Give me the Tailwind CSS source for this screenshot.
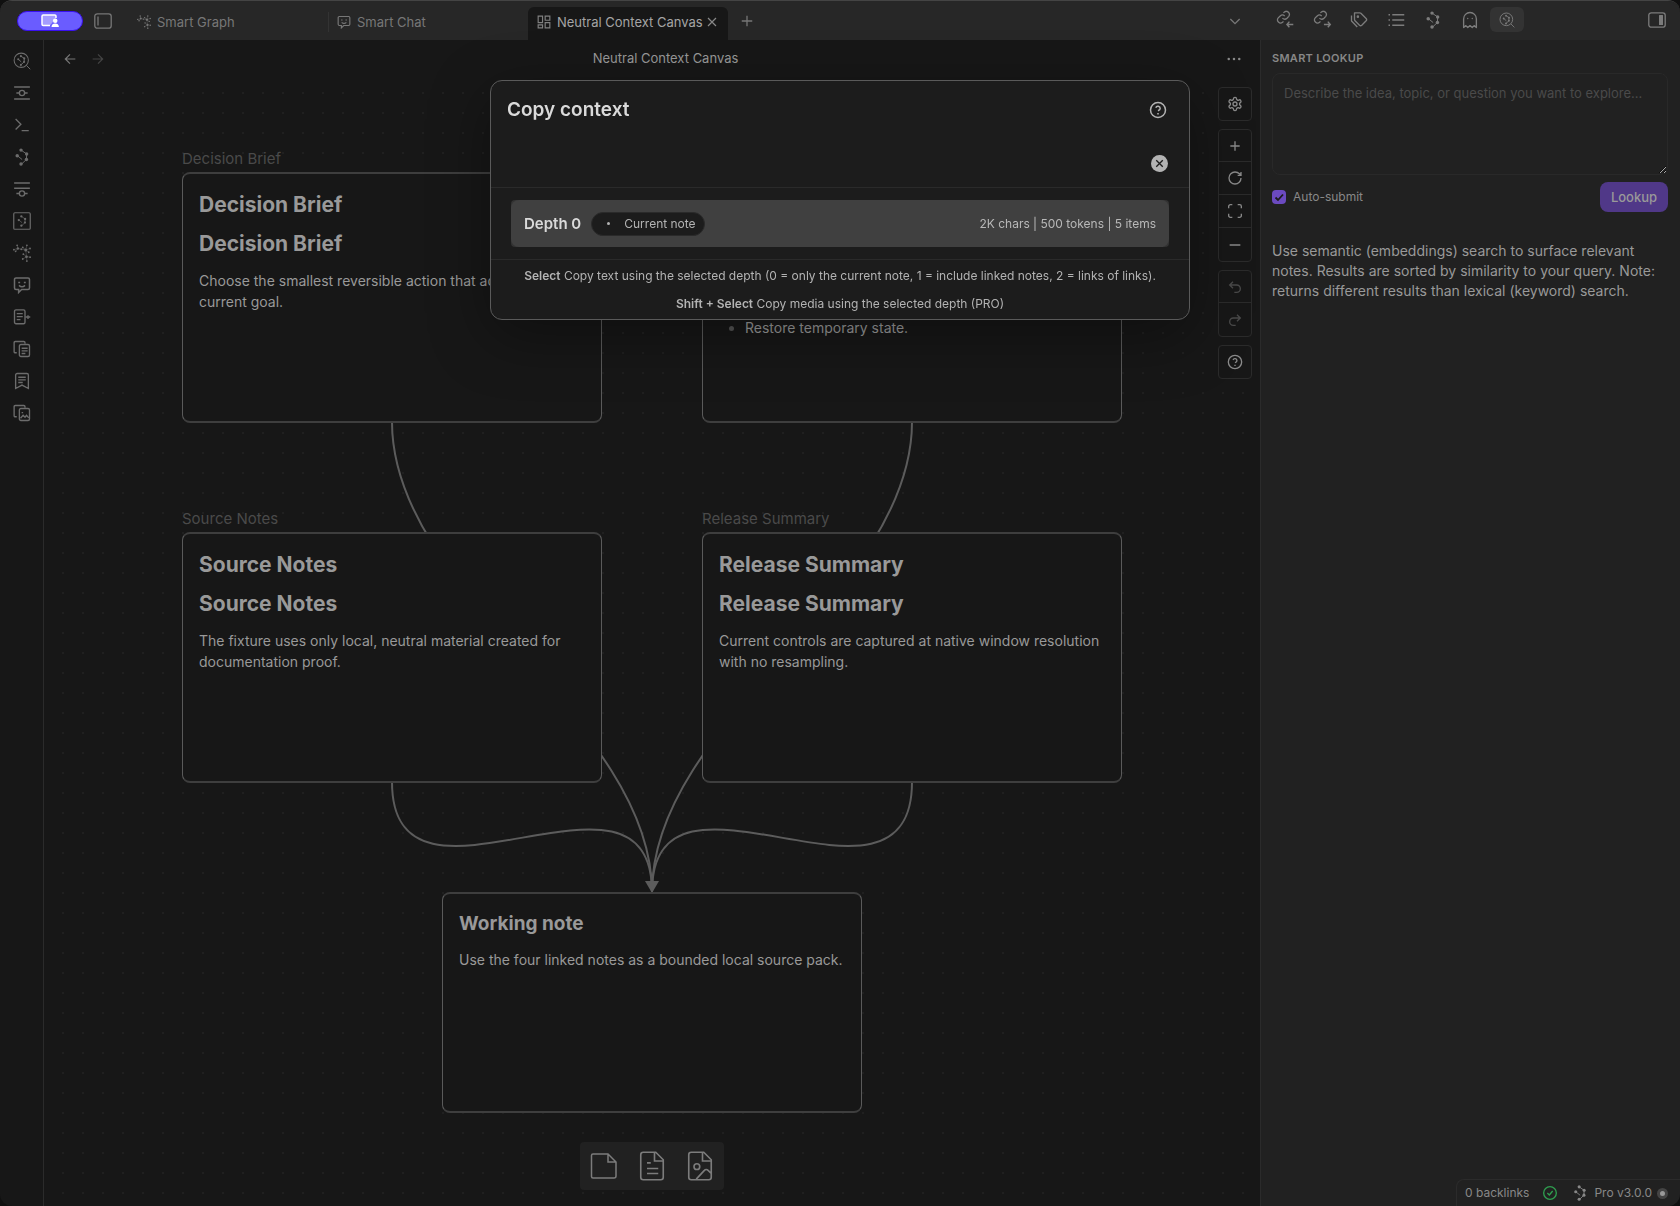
<!DOCTYPE html>
<html lang="en">
<head>
  <meta charset="UTF-8">
  <meta name="viewport" content="width=device-width, initial-scale=1.0">
  <title>Neutral Context Canvas</title>
  <!-- Tailwind CSS -->
  <script src="https://cdn.jsdelivr.net/npm/@tailwindcss/browser@4"></script>
</head>
<body class="bg-[#101010] font-['Inter',sans-serif] text-sm text-[#999]">
  <!-- Icon sprite -->
  <svg class="hidden" aria-hidden="true">
    <symbol id="i-network" viewBox="0 0 24 24">
      <path d="M10.7 2.7 18.2 8l-.3 7.2-7.2 7M5.8 10.2l6.4 5.2" fill="none" stroke="currentColor" stroke-width="1.3"/>
      <g fill="currentColor" stroke="none"><circle cx="10.7" cy="2.8" r="2.3"/><circle cx="18.2" cy="8" r="2.3"/><circle cx="17.9" cy="15.2" r="2.3"/><circle cx="10.7" cy="21.4" r="2.3"/><circle cx="5.6" cy="10.2" r="2.3"/></g>
    </symbol>
    <symbol id="i-graph" viewBox="0 0 24 24">
      <path d="M1 7.5 6.5 6l4.500 1M6.500 6 5.500 1.800M6.500 6 3.500 9.800M17 8l-4-3.500M17 8l1.500-6M17 8l5.500-2M17 8l4 3M17 8l1 9M18 17l-4-3.500M18 17l-5 3M18 17l.5 6M18 17l5 .5M11 7l6 1" fill="none" stroke="currentColor" stroke-width=".6"/>
      <g fill="currentColor" stroke="none"><circle cx="6.500" cy="6" r="1.600"/><circle cx="1.200" cy="7.500" r="1.200"/><circle cx="5.500" cy="1.800" r="1.200"/><circle cx="3.500" cy="9.800" r="1.200"/><circle cx="11" cy="7" r="1.200"/><circle cx="17" cy="8" r="2"/><circle cx="13" cy="4.500" r="1.200"/><circle cx="18.500" cy="1.800" r="1.200"/><circle cx="22.700" cy="6" r="1.200"/><circle cx="21" cy="11" r="1.200"/><circle cx="18" cy="17" r="1.800"/><circle cx="13.800" cy="13.500" r="1.200"/><circle cx="13" cy="20" r="1.200"/><circle cx="18.500" cy="22.700" r="1.200"/><circle cx="22.800" cy="17.500" r="1.200"/></g>
    </symbol>
    <symbol id="i-lookup" viewBox="0 0 24 24">
      <circle cx="11" cy="11" r="9.500" fill="none" stroke="currentColor" stroke-width="1.400"/><path d="m18 18 5 5M10.500 5.500l4.500 3-.2 4.700-4.300 4M7 9.700l4 3.500" fill="none" stroke="currentColor" stroke-width="1.300"/>
      <g fill="currentColor" stroke="none"><circle cx="10.500" cy="5.500" r="1.400"/><circle cx="15" cy="8.500" r="1.400"/><circle cx="14.800" cy="13.200" r="1.400"/><circle cx="10.500" cy="17.200" r="1.400"/><circle cx="7" cy="9.700" r="1.400"/></g>
    </symbol>
    <symbol id="i-smile" viewBox="0 0 24 24">
      <path d="M4 2.500h16a2 2 0 0 1 2 2V16a2 2 0 0 1-2 2h-8.500l-4 4v-4H4a2 2 0 0 1-2-2V4.500a2 2 0 0 1 2-2ZM7 8.500h2.500M14.500 8.500H17M8 12.500c2.500 2.500 5.500 2.500 8 0"/>
    </symbol>
    <symbol id="i-help" viewBox="0 0 24 24"><circle cx="12" cy="12" r="10"/><path d="M9.090 9a3 3 0 0 1 5.830 1c0 2-3 3-3 3M11 17h2"/></symbol>
    <symbol id="i-x" viewBox="0 0 24 24"><path d="M18 6 6 18M6 6l12 12"/></symbol>
    <symbol id="i-plus" viewBox="0 0 24 24"><path d="M5 12h14M12 5v14"/></symbol>
    <symbol id="i-left" viewBox="0 0 24 24"><path d="m12 19-7-7 7-7M20 12H5"/></symbol>
    <symbol id="i-right" viewBox="0 0 24 24"><path d="M4 12h15M12 5l7 7-7 7"/></symbol>
    <symbol id="i-link" viewBox="0 0 24 24"><path d="M9.500 12a5 5 0 0 0 7 .3l2.700-3A4.800 4.800 0 0 0 12.500 2.600L11 4M13 9a5 5 0 0 0-7-.3l-3 3a4.800 4.800 0 0 0 6.700 6.800L11 17"/></symbol>
  </svg>

  <div class="flex h-screen flex-col overflow-hidden rounded-xl border-t border-[#444] bg-[#171717]">
    <!-- Title bar -->
    <header class="flex h-[39px] shrink-0 bg-[#272727]">
      <div class="flex min-w-0 flex-1 items-center">
        <button class="ml-[17px] flex h-5 w-[66px] shrink-0 items-center justify-center rounded-full border border-[#3a10f0] bg-[#6a5cff] text-white" aria-label="Screen sharing">
          <svg class="h-[14px] w-[18px]" viewBox="0 0 18 14"><path d="M9 11.500H2.200A1.200 1.200 0 0 1 1 10.300V2.200A1.200 1.200 0 0 1 2.200 1h11.600A1.200 1.200 0 0 1 15 2.200V4" fill="#a49cff" stroke="#fff" stroke-width="1.500"/><circle cx="14.200" cy="6.800" r="2.300" fill="#fff"/><path d="M10.500 13c0-2.600 1.700-3.600 3.700-3.600s3.700 1 3.700 3.600z" fill="#fff"/></svg>
        </button>
        <button class="ml-[11px] text-[#777]" aria-label="Toggle left sidebar">
          <svg class="h-4 w-[18px]" viewBox="0 0 18 16" fill="none" stroke="currentColor" stroke-width="1.300"><rect x=".8" y=".8" width="16.400" height="14.400" rx="2.500"/><path d="M4 3.500v9"/></svg>
        </button>
        <nav class="ml-[17px] flex h-full flex-1 items-end text-[13px]">
          <a href="#" class="flex h-[33px] w-[200px] items-center pb-[3px] pl-2 text-[#777]">
            <svg class="mr-[6px] size-[14px]"><use href="#i-graph"/></svg>Smart Graph
          </a>
          <a href="#" class="relative flex h-[33px] w-[199px] items-center pb-[3px] pl-2 text-[#777] before:absolute before:left-[-1px] before:top-[5px] before:h-5 before:w-px before:bg-[#333]">
            <svg class="mr-[6px] size-[14px]" fill="none" stroke="currentColor" stroke-width="2"><use href="#i-smile"/></svg>Smart Chat
          </a>
          <a href="#" class="flex h-[33px] w-[200px] items-center whitespace-nowrap rounded-t-md bg-[#171717] pb-[3px] pl-[9px] pr-2 text-[#a5a5a5]">
            <svg class="mr-[6px] size-[14px] shrink-0 text-[#808080]" viewBox="0 0 24 24" fill="none" stroke="currentColor" stroke-width="2"><path d="M2 2h7.500v11H2zM14 2h8v7h-8zM14 13h8v9h-8zM2 17h7.500v5H2z"/></svg>
            <span class="flex-1">Neutral Context Canvas</span>
            <svg class="size-4 shrink-0 text-[#888]" fill="none" stroke="currentColor" stroke-width="1.800"><use href="#i-x"/></svg>
          </a>
          <button class="mb-[10px] ml-[10px] text-[#777]" aria-label="New tab"><svg class="size-[18px]" fill="none" stroke="currentColor" stroke-width="1.700"><use href="#i-plus"/></svg></button>
        </nav>
        <button class="mr-[17px] text-[#777]" aria-label="Tab list"><svg class="size-4" viewBox="0 0 24 24" fill="none" stroke="currentColor" stroke-width="2"><path d="m5 9 7 7 7-7"/></svg></button>
      </div>
      <div class="flex w-[420px] shrink-0 items-center gap-[3px] pb-[2px] pl-2 text-[#7c7c7c]">
        <button class="flex h-[25px] w-[34px] items-center justify-center" aria-label="Backlinks"><svg class="size-[17px] overflow-visible" viewBox="0 0 24 24" fill="none" stroke="currentColor" stroke-width="2"><use href="#i-link" width="22" height="22" x="-1" y="-1"/><path d="M23 19h-9m3.500-4L14 19l3.500 4"/></svg></button>
        <button class="flex h-[25px] w-[34px] items-center justify-center" aria-label="Outgoing links"><svg class="size-[17px] overflow-visible" viewBox="0 0 24 24" fill="none" stroke="currentColor" stroke-width="2"><use href="#i-link" width="22" height="22" x="-1" y="-1"/><path d="M14 19h9m-3.500-4 3.500 4-3.500 4"/></svg></button>
        <button class="flex h-[25px] w-[34px] items-center justify-center" aria-label="Tags"><svg class="size-[18px]" viewBox="0 0 24 24" fill="none" stroke="currentColor" stroke-width="1.800" stroke-linejoin="round"><path d="M6 2.500h7a2 2 0 0 1 1.500.6l7 7a2.200 2.200 0 0 1 0 3l-5.800 5.800a2.200 2.200 0 0 1-3 0l-6-6a2 2 0 0 1-.7-1.500z"/><path d="M2 6v6.500c0 .6.300 1.200.7 1.600l7 7.200"/><circle cx="10.500" cy="7.500" r=".8" fill="currentColor"/></svg></button>
        <button class="flex h-[25px] w-[34px] items-center justify-center" aria-label="Outline"><svg class="size-[18px]" viewBox="0 0 24 24" fill="none" stroke="currentColor" stroke-width="1.800"><path d="M7 5h16M7 12h16M7 19h16M2 5h2M2 12h2M2 19h2"/></svg></button>
        <button class="flex h-[25px] w-[34px] items-center justify-center" aria-label="Connections"><svg class="size-[18px]"><use href="#i-network"/></svg></button>
        <button class="flex h-[25px] w-[34px] items-center justify-center" aria-label="Ghost"><svg class="size-[18px]" viewBox="0 0 24 24" fill="none" stroke="currentColor" stroke-width="1.800" stroke-linejoin="round"><path d="M9 10h.01M15 10h.01M12 2a8.500 8.500 0 0 0-8.500 8.500V22l3-2.500L9 22l3-2.500 3 2.500 2.500-2.500 3 2.500V10.500A8.500 8.500 0 0 0 12 2z" stroke-linecap="round"/></svg></button>
        <button class="flex h-[25px] w-[34px] items-center justify-center rounded-md bg-[#333]" aria-label="Smart Lookup"><svg class="size-4"><use href="#i-lookup"/></svg></button>
        <button class="ml-auto mr-[14px]" aria-label="Toggle right sidebar"><svg class="h-4 w-[18px]" viewBox="0 0 18 16" fill="none" stroke="currentColor" stroke-width="1.300"><rect x=".8" y=".8" width="16.400" height="14.400" rx="2.500"/><rect x="11" y="3" width="4" height="10" rx=".5" fill="currentColor" stroke="none"/></svg></button>
      </div>
    </header>

    <div class="flex min-h-0 flex-1">
      <!-- Ribbon -->
      <aside class="flex w-11 shrink-0 flex-col items-center gap-[14px] border-r border-[#2b2b2b] pt-3 text-[#6c6c6c]">
        <button aria-label="Smart Lookup"><svg class="size-[18px]"><use href="#i-lookup"/></svg></button>
        <button aria-label="Random connection"><svg class="size-[18px]" viewBox="0 0 24 24" fill="none" stroke="currentColor" stroke-width="1.800"><path d="M1.500 4h21M1.500 20h21M4.500 12H9M15 12h4.500"/><circle cx="12" cy="12" r="3.500"/></svg></button>
        <button aria-label="Command palette"><svg class="size-[18px]" viewBox="0 0 24 24" fill="none" stroke="currentColor" stroke-width="1.800"><path d="m3.500 4 7 7-7 7M11.500 19.500H21"/></svg></button>
        <button aria-label="Connections"><svg class="size-[18px]"><use href="#i-network"/></svg></button>
        <button aria-label="Footer connections"><svg class="size-[18px]" viewBox="0 0 24 24" fill="none" stroke="currentColor" stroke-width="1.800"><path d="M1.500 4h21M1.500 11h21M4.500 18H9M15 18h4.500"/><circle cx="12" cy="18" r="3.500"/></svg></button>
        <button aria-label="Smart Context"><svg class="size-[18px]" viewBox="0 0 24 24" fill="none" stroke="currentColor" stroke-width="1.600"><rect x="1" y="1" width="22" height="22" rx="1.500"/><use href="#i-network" x="4" y="4" width="16" height="16"/></svg></button>
        <button aria-label="Smart Graph"><svg class="size-[18px]"><use href="#i-graph"/></svg></button>
        <button aria-label="Smart Chat"><svg class="size-[18px]" fill="none" stroke="currentColor" stroke-width="2"><use href="#i-smile"/></svg></button>
        <button aria-label="Add note"><svg class="size-[18px]" viewBox="0 0 24 24" fill="none" stroke="currentColor" stroke-width="1.800"><rect x="2" y="2.500" width="14" height="18.500" rx="2"/><path d="M5 7.500h8M5 11.500h8M5 15.500h5M16.500 12H23M20 9.500v5"/></svg></button>
        <button aria-label="Copy note"><svg class="size-[18px]" viewBox="0 0 24 24" fill="none" stroke="currentColor" stroke-width="1.800"><path d="M5 17H3a1.500 1.500 0 0 1-1.500-1.500v-12A1.500 1.500 0 0 1 3 2h11.500A1.500 1.500 0 0 1 16 3.500V5"/><rect x="8.500" y="6" width="13.500" height="16" rx="2"/><path d="M11.500 11h8M11.500 14.500h8M11.500 18h5"/></svg></button>
        <button aria-label="Bookmarks"><svg class="size-[18px]" viewBox="0 0 24 24" fill="none" stroke="currentColor" stroke-width="1.800"><path d="M5.500 2h13a2 2 0 0 1 2 2v18L12 17.500 3.500 22V4a2 2 0 0 1 2-2ZM7 7h10M7 10.500h10M7 14h6"/></svg></button>
        <button aria-label="Copy media"><svg class="size-[18px]" viewBox="0 0 24 24" fill="none" stroke="currentColor" stroke-width="1.800"><path d="M5 17H3a1.500 1.500 0 0 1-1.500-1.500v-12A1.500 1.500 0 0 1 3 2h11.500A1.500 1.500 0 0 1 16 3.500V5"/><rect x="8.500" y="6" width="13.500" height="16" rx="2"/><path d="m10 19 3.500-4 2.500 2.500 2-2.500 3 3.500M11.500 11.500h2"/></svg></button>
      </aside>

      <main class="flex min-w-0 flex-1 flex-col">
        <div class="flex h-[38px] shrink-0 items-center pb-px pl-[18px] pr-[17px]">
          <div class="flex gap-3">
            <button class="text-[#777]" aria-label="Back"><svg class="size-4" fill="none" stroke="currentColor" stroke-width="1.800"><use href="#i-left"/></svg></button>
            <button class="text-[#444]" aria-label="Forward"><svg class="size-4" fill="none" stroke="currentColor" stroke-width="1.800"><use href="#i-right"/></svg></button>
          </div>
          <h1 class="flex-1 text-center text-[13px]">Neutral Context Canvas</h1>
          <button class="text-[#888]" aria-label="More options"><svg class="size-[18px]" viewBox="0 0 24 24" fill="currentColor"><circle cx="5" cy="12" r="1.700"/><circle cx="12" cy="12" r="1.700"/><circle cx="19" cy="12" r="1.700"/></svg></button>
        </div>

        <!-- Canvas -->
        <div class="relative flex-1 overflow-hidden bg-[radial-gradient(circle_at_1px_1px,#202020_1px,transparent_1px)] bg-[length:20px_20px] bg-[position:18px_14px] text-[#999]">
          <svg class="absolute left-0 top-0 h-full w-full" fill="none" stroke="#5c5c5c" stroke-width="2">
            <path d="M348 344C348 516 608 643 608 814"/>
            <path d="M868 344C868 516 608 643 608 814"/>
            <path d="M348 704C348 861 608 659 608 814"/>
            <path d="M868 704C868 861 608 659 608 814"/>
            <path d="M601 803h14l-7 12z" fill="#5c5c5c" stroke="none"/>
          </svg>

          <div class="absolute left-[138px] top-[68px] w-[420px]">
            <div class="h-[26px] text-[15px] leading-[26px] text-[#4a4a4a]">Decision Brief</div>
            <article class="h-[251px] rounded-lg border-x border-y-2 border-x-[#5a5a5a] border-y-[#3e3e3e] bg-[#171717] px-4 pt-[11px]">
              <h2 class="text-[21px] font-bold leading-[39px]">Decision Brief</h2>
              <h2 class="text-[21px] font-bold leading-[39px]">Decision Brief</h2>
              <p class="mt-[7px] leading-[21px]">Choose the smallest reversible action that advances the current goal.</p>
            </article>
          </div>
          <div class="absolute left-[658px] top-[68px] w-[420px]">
            <div class="h-[26px] text-[15px] leading-[26px] text-[#4a4a4a]">Checklist</div>
            <article class="h-[251px] rounded-lg border-x border-y-2 border-x-[#5a5a5a] border-y-[#3e3e3e] bg-[#171717] px-4 pt-[11px]">
              <h2 class="text-[21px] font-bold leading-[39px]">Checklist</h2>
              <h2 class="text-[21px] font-bold leading-[39px]">Checklist</h2>
              <ul class="mt-[54px] list-disc pl-[26px] leading-[21px] marker:text-[#555]">
                <li>Restore temporary state.</li>
              </ul>
            </article>
          </div>
          <div class="absolute left-[138px] top-[428px] w-[420px]">
            <div class="h-[26px] text-[15px] leading-[26px] text-[#4a4a4a]">Source Notes</div>
            <article class="h-[251px] rounded-lg border-x border-y-2 border-x-[#5a5a5a] border-y-[#3e3e3e] bg-[#171717] px-4 pt-[11px]">
              <h2 class="text-[21px] font-bold leading-[39px]">Source Notes</h2>
              <h2 class="text-[21px] font-bold leading-[39px]">Source Notes</h2>
              <p class="mt-[7px] leading-[21px]">The fixture uses only local, neutral material created for documentation proof.</p>
            </article>
          </div>
          <div class="absolute left-[658px] top-[428px] w-[420px]">
            <div class="h-[26px] text-[15px] leading-[26px] text-[#4a4a4a]">Release Summary</div>
            <article class="h-[251px] rounded-lg border-x border-y-2 border-x-[#5a5a5a] border-y-[#3e3e3e] bg-[#171717] px-4 pt-[11px]">
              <h2 class="text-[21px] font-bold leading-[39px]">Release Summary</h2>
              <h2 class="text-[21px] font-bold leading-[39px]">Release Summary</h2>
              <p class="mt-[7px] leading-[21px]">Current controls are captured at native window resolution with no resampling.</p>
            </article>
          </div>
          <article class="absolute left-[398px] top-[814px] h-[221px] w-[420px] rounded-lg border-x border-y-2 border-x-[#5a5a5a] border-y-[#3e3e3e] bg-[#171717] px-4 pt-[10px]">
            <h2 class="text-[19px] font-bold leading-[39px]">Working note</h2>
            <p class="mt-[6px] leading-[21px]">Use the four linked notes as a bounded local source pack.</p>
          </article>

          <!-- Canvas controls -->
          <div class="absolute right-2 top-[9px] flex w-[34px] flex-col gap-2 text-[#8a8a8a]">
            <div class="rounded border border-[#2b2b2b] bg-[#171717]">
              <button class="flex h-8 w-full items-center justify-center" aria-label="Canvas settings"><svg class="size-4" viewBox="0 0 24 24" fill="none" stroke="currentColor" stroke-width="2" stroke-linejoin="round"><path d="M12.220 2h-.44a2 2 0 0 0-2 2v.18a2 2 0 0 1-1 1.730l-.43.25a2 2 0 0 1-2 0l-.15-.08a2 2 0 0 0-2.730.73l-.22.38a2 2 0 0 0 .73 2.730l.15.1a2 2 0 0 1 1 1.720v.51a2 2 0 0 1-1 1.740l-.15.09a2 2 0 0 0-.73 2.730l.22.38a2 2 0 0 0 2.730.73l.15-.08a2 2 0 0 1 2 0l.43.25a2 2 0 0 1 1 1.730V20a2 2 0 0 0 2 2h.44a2 2 0 0 0 2-2v-.18a2 2 0 0 1 1-1.730l.43-.25a2 2 0 0 1 2 0l.15.08a2 2 0 0 0 2.730-.73l.22-.39a2 2 0 0 0-.73-2.730l-.15-.08a2 2 0 0 1-1-1.740v-.5a2 2 0 0 1 1-1.740l.15-.09a2 2 0 0 0 .73-2.730l-.22-.38a2 2 0 0 0-2.730-.73l-.15.08a2 2 0 0 1-2 0l-.43-.25a2 2 0 0 1-1-1.730V4a2 2 0 0 0-2-2z"/><circle cx="12" cy="12" r="3"/></svg></button>
            </div>
            <div class="divide-y divide-[#2b2b2b] rounded border border-[#2b2b2b] bg-[#171717]">
              <button class="flex h-8 w-full items-center justify-center" aria-label="Zoom in"><svg class="size-4" fill="none" stroke="currentColor" stroke-width="2"><use href="#i-plus"/></svg></button>
              <button class="flex h-[33px] w-full items-center justify-center" aria-label="Reset zoom"><svg class="size-4" viewBox="0 0 24 24" fill="none" stroke="currentColor" stroke-width="2"><path d="M21 12a9 9 0 1 1-9-9c2.520 0 4.930 1 6.740 2.740L21 8M21 3v5h-5"/></svg></button>
              <button class="flex h-[33px] w-full items-center justify-center" aria-label="Zoom to fit"><svg class="size-4" viewBox="0 0 24 24" fill="none" stroke="currentColor" stroke-width="2"><path d="M8 2.500H5A2.500 2.500 0 0 0 2.500 5v3M21.500 8V5A2.500 2.500 0 0 0 19 2.500h-3M2.500 16v3A2.500 2.500 0 0 0 5 21.500h3M16 21.500h3a2.500 2.500 0 0 0 2.500-2.500v-3"/></svg></button>
              <button class="flex h-[33px] w-full items-center justify-center" aria-label="Zoom out"><svg class="size-4" viewBox="0 0 24 24" fill="none" stroke="currentColor" stroke-width="2"><path d="M4 12h16"/></svg></button>
            </div>
            <div class="divide-y divide-[#2b2b2b] rounded border border-[#2b2b2b] bg-[#171717] text-[#4a4a4a]">
              <button class="flex h-8 w-full items-center justify-center" aria-label="Undo"><svg class="size-4" viewBox="0 0 24 24" fill="none" stroke="currentColor" stroke-width="2"><path d="M9 14 4 9l5-5M4 9h10.500a5.500 5.500 0 0 1 0 11H11"/></svg></button>
              <button class="flex h-[33px] w-full items-center justify-center" aria-label="Redo"><svg class="size-4" viewBox="0 0 24 24" fill="none" stroke="currentColor" stroke-width="2"><path d="m15 14 5-5-5-5M20 9H9.500a5.500 5.500 0 0 0 0 11H13"/></svg></button>
            </div>
            <div class="rounded border border-[#2b2b2b] bg-[#171717]">
              <button class="flex h-8 w-full items-center justify-center" aria-label="Canvas help"><svg class="size-4" fill="none" stroke="currentColor" stroke-width="2"><use href="#i-help"/></svg></button>
            </div>
          </div>

          <!-- Card menu -->
          <div class="absolute bottom-4 left-1/2 flex -translate-x-1/2 rounded bg-[#212121] text-[#7c7c7c]">
            <button class="flex size-12 items-center justify-center" aria-label="Add card"><svg class="size-7" viewBox="0 0 28 28" fill="none" stroke="currentColor" stroke-width="1.500"><path d="M3 2h15l8 8v14a2 2 0 0 1-2 2H3a1.500 1.500 0 0 1-1.500-1.500v-21A1.500 1.500 0 0 1 3 2ZM18 2v8h8"/></svg></button>
            <button class="flex size-12 items-center justify-center" aria-label="Add note"><svg class="size-[30px]" viewBox="0 0 24 24" fill="none" stroke="currentColor" stroke-width="1.300"><path d="M15 1H5a2 2 0 0 0-2 2v18a2 2 0 0 0 2 2h14a2 2 0 0 0 2-2V7zM14 1v7h7M8 9.500h3M8 14h9M8 18h9"/></svg></button>
            <button class="flex size-12 items-center justify-center" aria-label="Add media"><svg class="size-[30px]" viewBox="0 0 24 24" fill="none" stroke="currentColor" stroke-width="1.300"><path d="M15 1H5a2 2 0 0 0-2 2v18a2 2 0 0 0 2 2h14a2 2 0 0 0 2-2V7zM14 1v7h7M9 22.500l6.500-7a2 2 0 0 1 3 0l2.500 2.500"/><circle cx="9.500" cy="12.500" r="2.300"/></svg></button>
          </div>
        </div>
      </main>

      <!-- Right sidebar -->
      <aside class="flex w-[420px] shrink-0 flex-col border-l border-[#2b2b2b] bg-[#212121] pl-[11px] pt-[11px]">
        <h2 class="text-[11px] font-semibold leading-[14px] tracking-wide text-[#888]">SMART LOOKUP</h2>
        <form class="mr-3 mt-2">
          <textarea aria-label="Lookup query" placeholder="Describe the idea, topic, or question you want to explore..." class="block h-[102px] w-full resize rounded-lg border border-[#292929] bg-transparent px-[11px] py-[9px] text-[13px] leading-5 placeholder:text-[#4a4a4a]"></textarea>
          <div class="mt-[7px] flex items-center justify-between">
            <label class="flex items-center gap-[7px] text-xs text-[#888]">
              <span class="relative size-[14px]">
                <input type="checkbox" checked class="block size-[14px] appearance-none rounded bg-[#6b4ac0]">
                <svg class="pointer-events-none absolute inset-0 size-[14px]" viewBox="0 0 14 14" fill="none" stroke="#1c1c1c" stroke-width="1.800"><path d="m3.500 7.500 2.500 2.500 5-5.500"/></svg>
              </span>
              Auto-submit
            </label>
            <button type="submit" class="h-[30px] w-[68px] rounded-lg bg-[#503888] text-[13px] font-medium text-[#999]">Lookup</button>
          </div>
        </form>
        <p class="mr-3 mt-[29px] leading-[20px]">Use semantic (embeddings) search to surface relevant notes. Results are sorted by similarity to your query. Note: returns different results than lexical (keyword) search.</p>
        <!-- Status bar -->
        <footer class="mt-auto flex h-[27px] items-center self-end whitespace-nowrap rounded-tl-lg border-l border-t border-[#2b2b2b] pl-2 pr-3 text-xs text-[#888]">
          <span>0 backlinks</span>
          <svg class="ml-[13px] size-4 text-[#2f9e4f]" viewBox="0 0 24 24" fill="none" stroke="currentColor" stroke-width="2"><circle cx="12" cy="12" r="9.500"/><path d="m8 12 3 3 5-6"/></svg>
          <svg class="ml-[14px] mr-[6px] size-4"><use href="#i-network"/></svg>
          <span>Pro v3.0.0</span>
          <span class="ml-[5px] size-[11px] rounded-full border-[3px] border-[#444] bg-[#999]"></span>
        </footer>
      </aside>
    </div>
  </div>

  <!-- Copy context modal -->
  <div role="dialog" aria-label="Copy context" class="fixed left-1/2 top-20 flex h-60 w-[700px] -translate-x-1/2 flex-col rounded-xl border border-[#5a5a5a] bg-[#1c1c1c] shadow-[0_16px_60px_rgba(0,0,0,0.35)]">
    <div class="flex h-[58px] items-center justify-between pl-4 pr-[22px]">
      <h2 class="text-[19px] font-semibold text-[#dadada]">Copy context</h2>
      <button class="text-[#b3b3b3]" aria-label="Help"><svg class="size-[18px]" fill="none" stroke="currentColor" stroke-width="2"><use href="#i-help"/></svg></button>
    </div>
    <div class="flex h-[49px] items-center border-b border-[#2a2a2a] pl-4 pr-[21px]">
      <input type="text" aria-label="Filter depths" class="h-10 flex-1 bg-transparent outline-none">
      <button class="flex size-[17px] items-center justify-center rounded-full bg-[#b3b3b3] text-[#1c1c1c]" aria-label="Clear"><svg class="size-[13px]" fill="none" stroke="currentColor" stroke-width="2.500"><use href="#i-x"/></svg></button>
    </div>
    <div class="border-b border-[#2a2a2a] px-5 py-3">
      <div class="rounded-sm bg-[#333]">
        <button class="flex h-[47px] w-full items-center rounded-lg bg-[#404040] px-[13px] text-[#dadada]">
          <span class="text-[15px] font-semibold">Depth 0</span>
          <span class="ml-[10px] flex h-6 items-center rounded-full border border-[#2a2a2a] bg-[#1c1c1c] pl-[15px] pr-2 text-xs text-[#b3b3b3]"><i class="mr-[14px] size-[3px] rounded-full bg-[#b3b3b3]"></i>Current note</span>
          <span class="ml-auto text-xs text-[#b8b8b8]">2K chars | 500 tokens | 5 items</span>
        </button>
      </div>
    </div>
    <div class="flex flex-1 flex-col items-center gap-[10px] whitespace-nowrap pt-[7px] text-xs leading-[18px] text-[#b3b3b3]">
      <div><b class="font-semibold">Select</b> Copy text using the selected depth (0 = only the current note, 1 = include linked notes, 2 = links of links).</div>
      <div><b class="font-semibold">Shift + Select</b> Copy media using the selected depth (PRO)</div>
    </div>
  </div>
</body>
</html>
